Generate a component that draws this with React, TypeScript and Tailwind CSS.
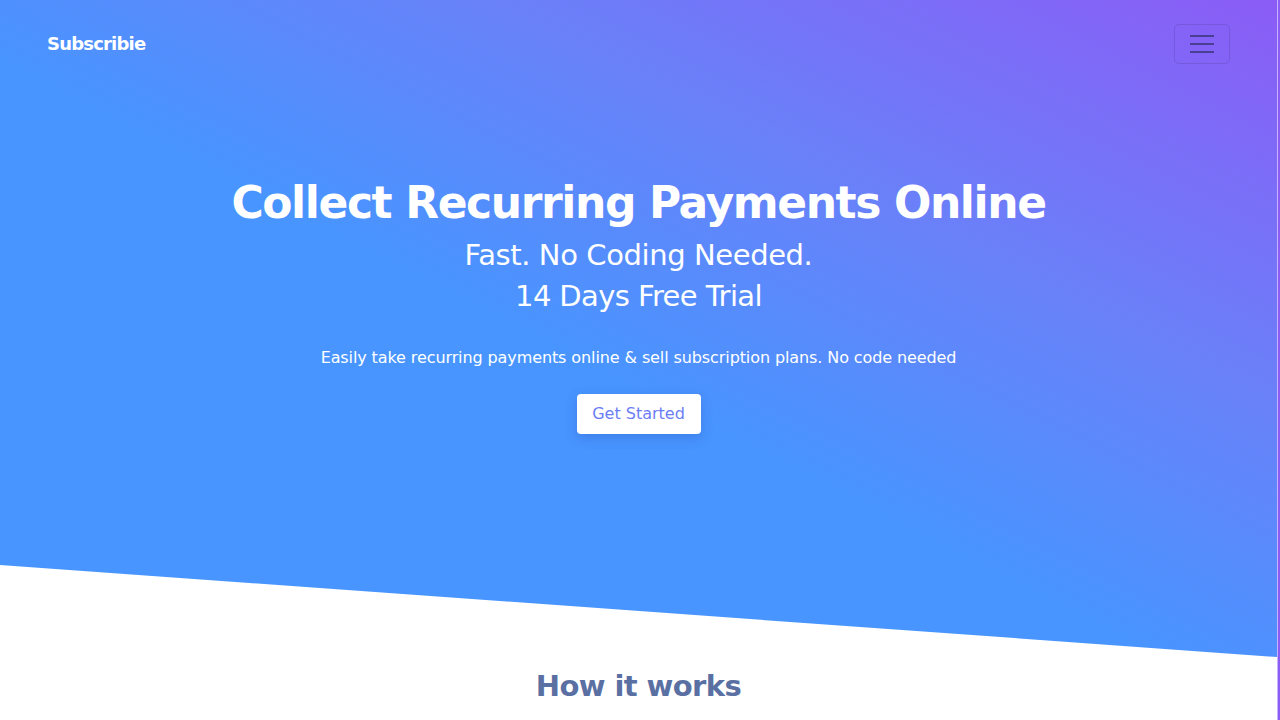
export default function App() {
  return (
    <div className="flex min-h-screen bg-white" style={{ fontFamily: '"DejaVu Sans", "Open Sans", sans-serif' }}>
      <div className="flex-1 overflow-hidden">
        {/* ── Hero ─────────────────────────────── */}
        <section className="h-[657px] bg-[linear-gradient(to_top_right,#4895ff_45%,#6a80f9_70%,#8b5cf6)] [clip-path:polygon(0_0,100%_0,100%_100%,0_86%)]">
          <nav className="flex h-[87px] items-center justify-between pl-[47px] pr-[47px]">
            <a className="text-[18px] font-bold tracking-[-0.8px] text-white">Subscribie</a>
            <button className="flex h-[40px] w-[56px] items-center justify-center rounded-[5px] border border-black/10">
              <svg width="24" height="20" viewBox="0 0 24 20" fill="none" stroke="#3f3882" strokeWidth="2" strokeOpacity="0.85">
                <path d="M0 2h24M0 10h24M0 18h24" />
              </svg>
            </button>
          </nav>
          <div className="flex flex-col items-center pt-[88px] text-center text-white">
            <h1 className="text-[44px] leading-[56px] font-bold tracking-[-1.4px]">
              Collect Recurring Payments Online
            </h1>
            <p className="mt-[4px] text-[29px] leading-[41px] tracking-[-0.4px]">Fast. No Coding Needed.</p>
            <p className="text-[29px] leading-[41px] tracking-[-0.6px]">14 Days Free Trial</p>
            <p className="mt-[29px] text-[16px] leading-[24px] tracking-[-0.1px]">
              Easily take recurring payments online &amp; sell subscription plans. No code needed
            </p>
            <button className="mt-[24px] h-[40px] w-[124px] rounded-[4px] bg-white text-[16px] text-[#6b7ef6] shadow-[0_4px_12px_rgba(40,60,160,0.25)]">
              Get Started
            </button>
          </div>
        </section>

        {/* ── How it works ─────────────────────── */}
        <h2 className="mt-[9px] text-center text-[29px] leading-[40px] font-bold tracking-[-0.6px] text-[#5a70a3]">
          How it works
        </h2>
      </div>
      <div className="w-[3px] border-l border-[#c6b3fa] bg-[#8b5cf6]" />
    </div>
  );
}
